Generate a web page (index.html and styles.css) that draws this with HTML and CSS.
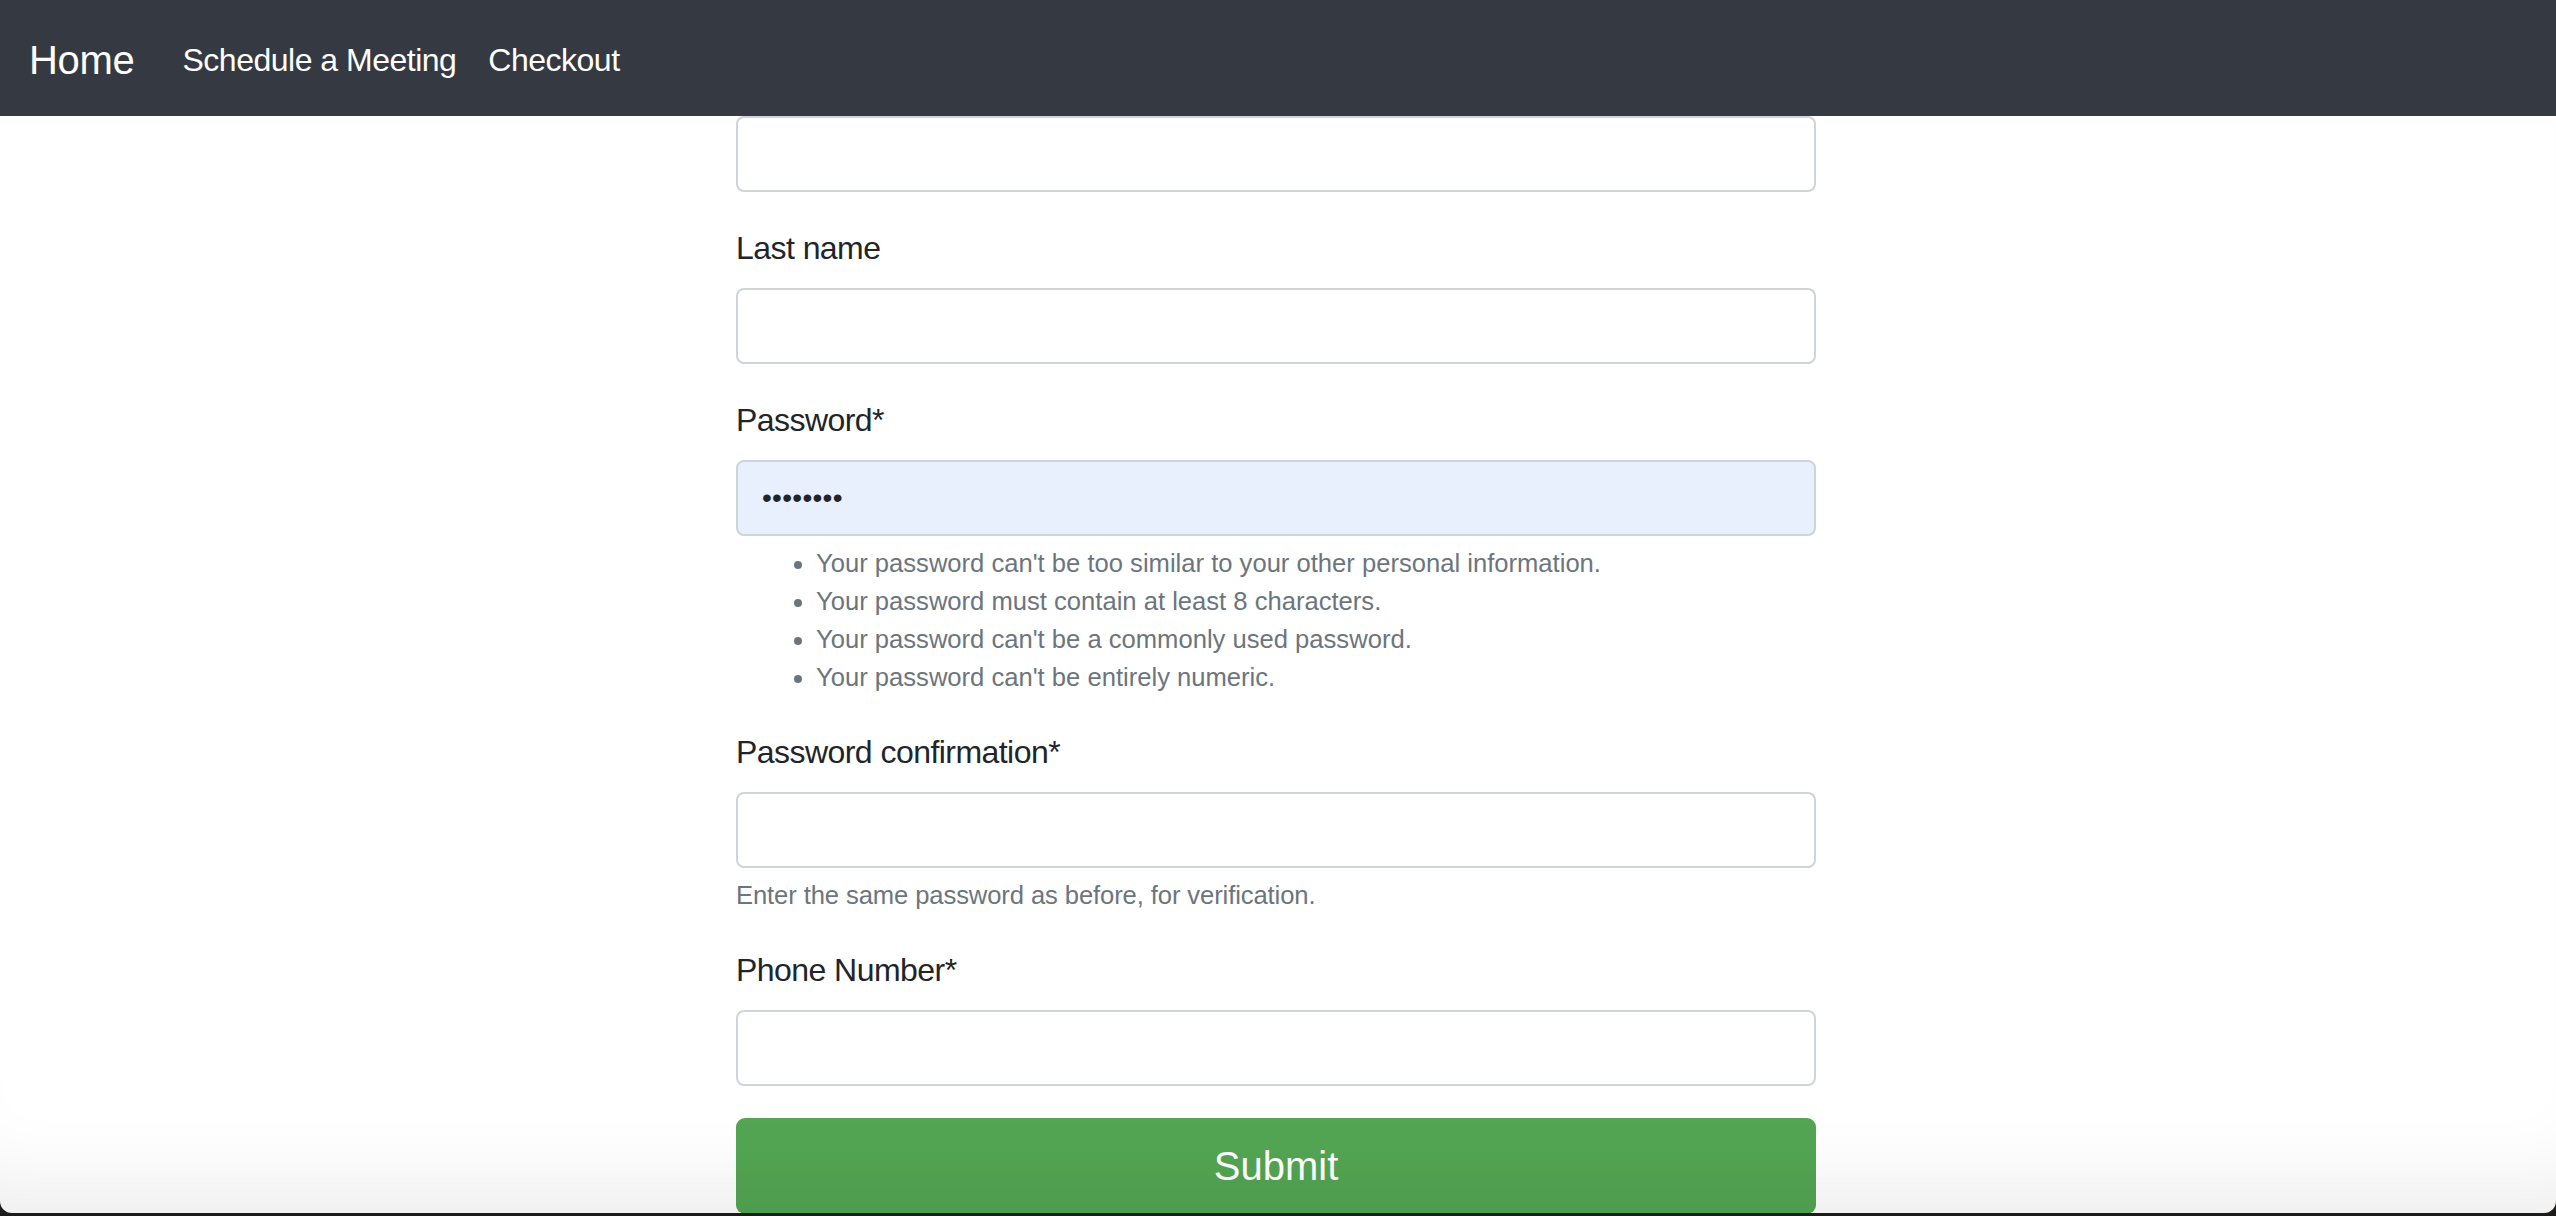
FILE: index.html
```html
<!DOCTYPE html>
<html lang="en">
<head>
<meta charset="utf-8">
<title>Sign up</title>
<link rel="stylesheet" href="styles.css">
</head>
<body>
<nav class="navbar">
  <a class="brand" href="#">Home</a>
  <a class="nav-link" href="#">Schedule a Meeting</a>
  <a class="nav-link" href="#">Checkout</a>
</nav>
<main class="page">
  <form class="signup">
    <div class="group">
      <input class="field" type="text" aria-label="First name">
    </div>
    <div class="group">
      <label class="label">Last name</label>
      <input class="field" type="text">
    </div>
    <div class="group">
      <label class="label">Password*</label>
      <input class="field field-filled" type="password" value="12345678">
      <ul class="help-list">
        <li>Your password can't be too similar to your other personal information.</li>
        <li>Your password must contain at least 8 characters.</li>
        <li>Your password can't be a commonly used password.</li>
        <li>Your password can't be entirely numeric.</li>
      </ul>
    </div>
    <div class="group">
      <label class="label">Password confirmation*</label>
      <input class="field" type="password">
      <small class="help-text">Enter the same password as before, for verification.</small>
    </div>
    <div class="group">
      <label class="label">Phone Number*</label>
      <input class="field" type="text">
    </div>
    <button class="submit" type="button">Submit</button>
  </form>
</main>
<div class="window-frame"></div>
</body>
</html>
```
FILE: styles.css
```css
html, body {
  margin: 0;
  padding: 0;
  background: #fff;
}
body {
  font-family: "Liberation Sans", Arial, sans-serif;
  color: #212529;
  height: 1216px;
  overflow: hidden;
}
.navbar {
  height: 116px;
  background: #353a42;
  display: flex;
  align-items: center;
  padding: 5px 32px 0 29px;
  box-sizing: border-box;
}
.brand {
  color: #fff;
  text-decoration: none;
  font-size: 40px;
  letter-spacing: -0.3px;
  margin-right: 32px;
}
.nav-link {
  color: #fff;
  text-decoration: none;
  font-size: 32px;
  letter-spacing: -0.5px;
  padding: 0 16px;
}
.page {
  display: flex;
  justify-content: center;
  padding-right: 4px;
}
.signup {
  width: 1080px;
}
.group {
  margin-bottom: 32px;
}
.label {
  display: block;
  font-size: 32px;
  line-height: 48px;
  margin-bottom: 16px;
  letter-spacing: -0.55px;
}
.field {
  display: block;
  width: 100%;
  height: 76px;
  box-sizing: border-box;
  border: 2px solid #ced4da;
  border-radius: 8px;
  padding: 12px 24px;
  font-size: 32px;
  font-family: inherit;
  background: #fff;
  color: #212529;
  outline: none;
}
.field-filled {
  background: #e8f0fe;
  font-size: 28px;
  letter-spacing: 0.3px;
}
.help-list {
  margin: 8px 0 0;
  padding-left: 80px;
  font-size: 25.6px;
  line-height: 38px;
  color: #6c757d;
}
.help-text {
  display: block;
  margin-top: 8px;
  font-size: 25.6px;
  line-height: 38px;
  color: #6c757d;
  letter-spacing: -0.1px;
}
.submit {
  display: block;
  width: 100%;
  height: 96px;
  border: none;
  border-radius: 9px;
  background: #53a553;
  color: #fff;
  font-size: 40px;
  font-family: inherit;
}
.window-frame {
  position: fixed;
  left: 0;
  right: 0;
  top: 0;
  bottom: 3px;
  pointer-events: none;
  border-radius: 0 0 12px 12px;
  box-shadow: inset 0 -90px 80px -60px rgba(0, 0, 0, 0.07), 0 0 0 40px #1d1c1b;
}
```
